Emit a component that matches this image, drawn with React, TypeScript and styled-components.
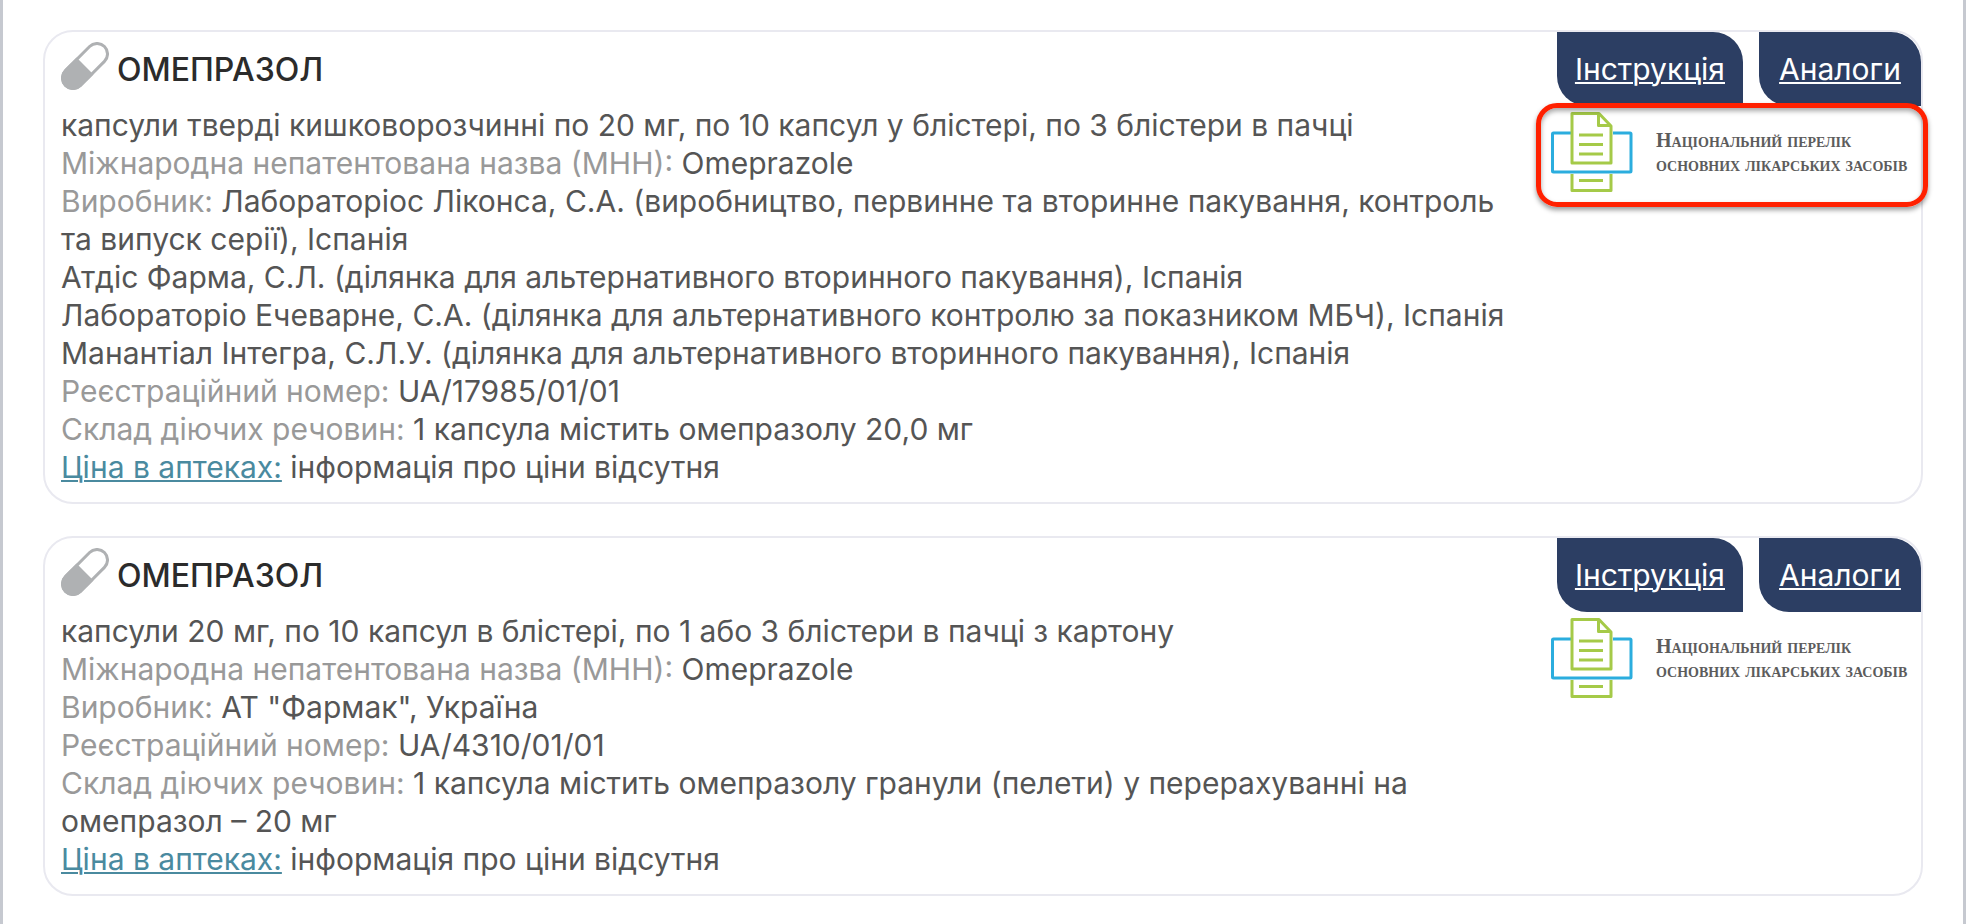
import React from 'react';
import styled, { createGlobalStyle } from 'styled-components';

const GlobalStyle = createGlobalStyle`
  *, *::before, *::after { box-sizing: border-box; }
  body {
    margin: 0;
    background: #ffffff;
    font-family: Inter, "Liberation Sans", sans-serif;
    color: #555555;
  }
`;

const Page = styled.main`
  min-height: 100vh;
  padding: 30px 40px;
  border: solid #c6c9d0;
  border-width: 0 3px;
  display: flex;
  flex-direction: column;
  gap: 32px;
`;

const Card = styled.article`
  display: flex;
  justify-content: space-between;
  gap: 24px;
  border: 2px solid #e9e9f0;
  border-radius: 30px;
`;

const Info = styled.div`
  flex: 1;
  min-width: 0;
  padding: 10px 0 16px 16px;
`;

const Heading = styled.header`
  display: flex;
  align-items: flex-start;
  gap: 8px;
  height: 64px;
`;

const Title = styled.h2`
  margin: 8px 0 0;
  font-size: 32px;
  line-height: 40px;
  font-weight: 500;
  color: #2b2b2b;
`;

const Line = styled.p`
  margin: 0;
  font-size: 30px;
  line-height: 38px;
`;

const Label = styled.span`
  color: #999999;
`;

const PriceLink = styled.a`
  color: #4a8a9f;
  text-decoration-thickness: 2px;
  text-underline-offset: 2px;
`;

const Side = styled.aside`
  flex: none;
  display: flex;
  flex-direction: column;
  align-items: flex-end;
`;

const Tabs = styled.nav`
  display: flex;
  gap: 16px;
`;

const TabLink = styled.a`
  min-width: 162px;
  height: 74px;
  padding: 0 18px;
  font-size: 30px;
  line-height: 74px;
  text-align: center;
  color: #ffffff;
  background: #2c3e63;
  border-radius: 0 30px;
  text-decoration-thickness: 2px;
  text-underline-offset: 2px;
`;

const Badge = styled.div`
  position: relative;
  display: flex;
  align-items: flex-start;
  gap: 23px;
  width: 360px;
  height: 80px;
  margin: 6px 10px 0 0;
`;

const BadgeText = styled.div`
  padding-top: 16px;
  font-family: "Liberation Serif", serif;
  font-size: 20px;
  line-height: 24px;
  font-weight: 700;
  font-variant: small-caps;
  color: #5c5c5c;
  white-space: nowrap;
`;

const Highlight = styled.div`
  position: absolute;
  inset: -9px -17px -15px -15px;
  border: 5px solid #ff2000;
  border-radius: 21px;
  box-shadow: 0 3px 5px rgba(0, 0, 0, 0.4), inset 0 3px 5px rgba(0, 0, 0, 0.35);
  pointer-events: none;
`;

const PillIcon = () => (
  <svg width="48" height="48" viewBox="0 0 48 48" aria-hidden="true">
    <g transform="rotate(45 24 24)">
      <rect x="13.5" y="-3.5" width="21" height="55" rx="10.5" fill="none" stroke="#afb1b3" strokeWidth="3" />
      <path d="M12 24H36V41A12 12 0 0 1 12 41Z" fill="#afb1b3" />
    </g>
  </svg>
);

const PrinterLogo = () => (
  <svg width="82" height="80" viewBox="0 0 82 80" fill="none" strokeWidth="3" strokeLinejoin="round" aria-hidden="true">
    <path d="M20 21H2.5Q1.5 21 1.5 22V59Q1.5 60 2.5 60H79Q80 60 80 59V22Q80 21 79 21H62" stroke="#2badde" />
    <path d="M21 62V78.500H60V62M28 68.500H52" stroke="#a5ca48" />
    <path d="M21 1.500H48L60 14V51H21ZM47.500 1.500V13.500H60M28 23H52M28 32.500H52M28 42H52" stroke="#a5ca48" />
  </svg>
);

type Row = { label?: string; text: string; link?: boolean };
type Drug = { name: string; rows: Row[]; highlighted?: boolean };

const drugs: Drug[] = [
  {
    name: 'ОМЕПРАЗОЛ',
    highlighted: true,
    rows: [
      { text: 'капсули тверді кишковорозчинні по 20 мг, по 10 капсул у блістері, по 3 блістери в пачці' },
      { label: 'Міжнародна непатентована назва (МНН):', text: 'Omeprazole' },
      {
        label: 'Виробник:',
        text: 'Лабораторіос Ліконса, С.А. (виробництво, первинне та вторинне пакування, контроль та випуск серії), Іспанія',
      },
      { text: 'Атдіс Фарма, С.Л. (ділянка для альтернативного вторинного пакування), Іспанія' },
      { text: 'Лабораторіо Ечеварне, С.А. (ділянка для альтернативного контролю за показником МБЧ), Іспанія' },
      { text: 'Манантіал Інтегра, С.Л.У. (ділянка для альтернативного вторинного пакування), Іспанія' },
      { label: 'Реєстраційний номер:', text: 'UA/17985/01/01' },
      { label: 'Склад діючих речовин:', text: '1 капсула містить омепразолу 20,0 мг' },
      { label: 'Ціна в аптеках:', text: 'інформація про ціни відсутня', link: true },
    ],
  },
  {
    name: 'ОМЕПРАЗОЛ',
    rows: [
      { text: 'капсули 20 мг, по 10 капсул в блістері, по 1 або 3 блістери в пачці з картону' },
      { label: 'Міжнародна непатентована назва (МНН):', text: 'Omeprazole' },
      { label: 'Виробник:', text: 'АТ "Фармак", Україна' },
      { label: 'Реєстраційний номер:', text: 'UA/4310/01/01' },
      {
        label: 'Склад діючих речовин:',
        text: '1 капсула містить омепразолу гранули (пелети) у перерахуванні на омепразол – 20 мг',
      },
      { label: 'Ціна в аптеках:', text: 'інформація про ціни відсутня', link: true },
    ],
  },
];

const DrugCard = ({ drug }: { drug: Drug }) => (
  <Card>
    <Info>
      <Heading>
        <PillIcon />
        <Title>{drug.name}</Title>
      </Heading>
      {drug.rows.map((row) => (
        <Line key={row.text}>
          {row.label && (row.link ? <PriceLink href="#price">{row.label}</PriceLink> : <Label>{row.label}</Label>)}
          {row.label && ' '}
          {row.text}
        </Line>
      ))}
    </Info>
    <Side>
      <Tabs>
        <TabLink href="#instruction">Інструкція</TabLink>
        <TabLink href="#analogs">Аналоги</TabLink>
      </Tabs>
      <Badge>
        <PrinterLogo />
        <BadgeText>
          Національний перелік
          <br />
          основних лікарських засобів
        </BadgeText>
        {drug.highlighted && <Highlight />}
      </Badge>
    </Side>
  </Card>
);

export default function App() {
  return (
    <>
      <GlobalStyle />
      <Page>
        {drugs.map((drug, i) => (
          <DrugCard key={i} drug={drug} />
        ))}
      </Page>
    </>
  );
}
